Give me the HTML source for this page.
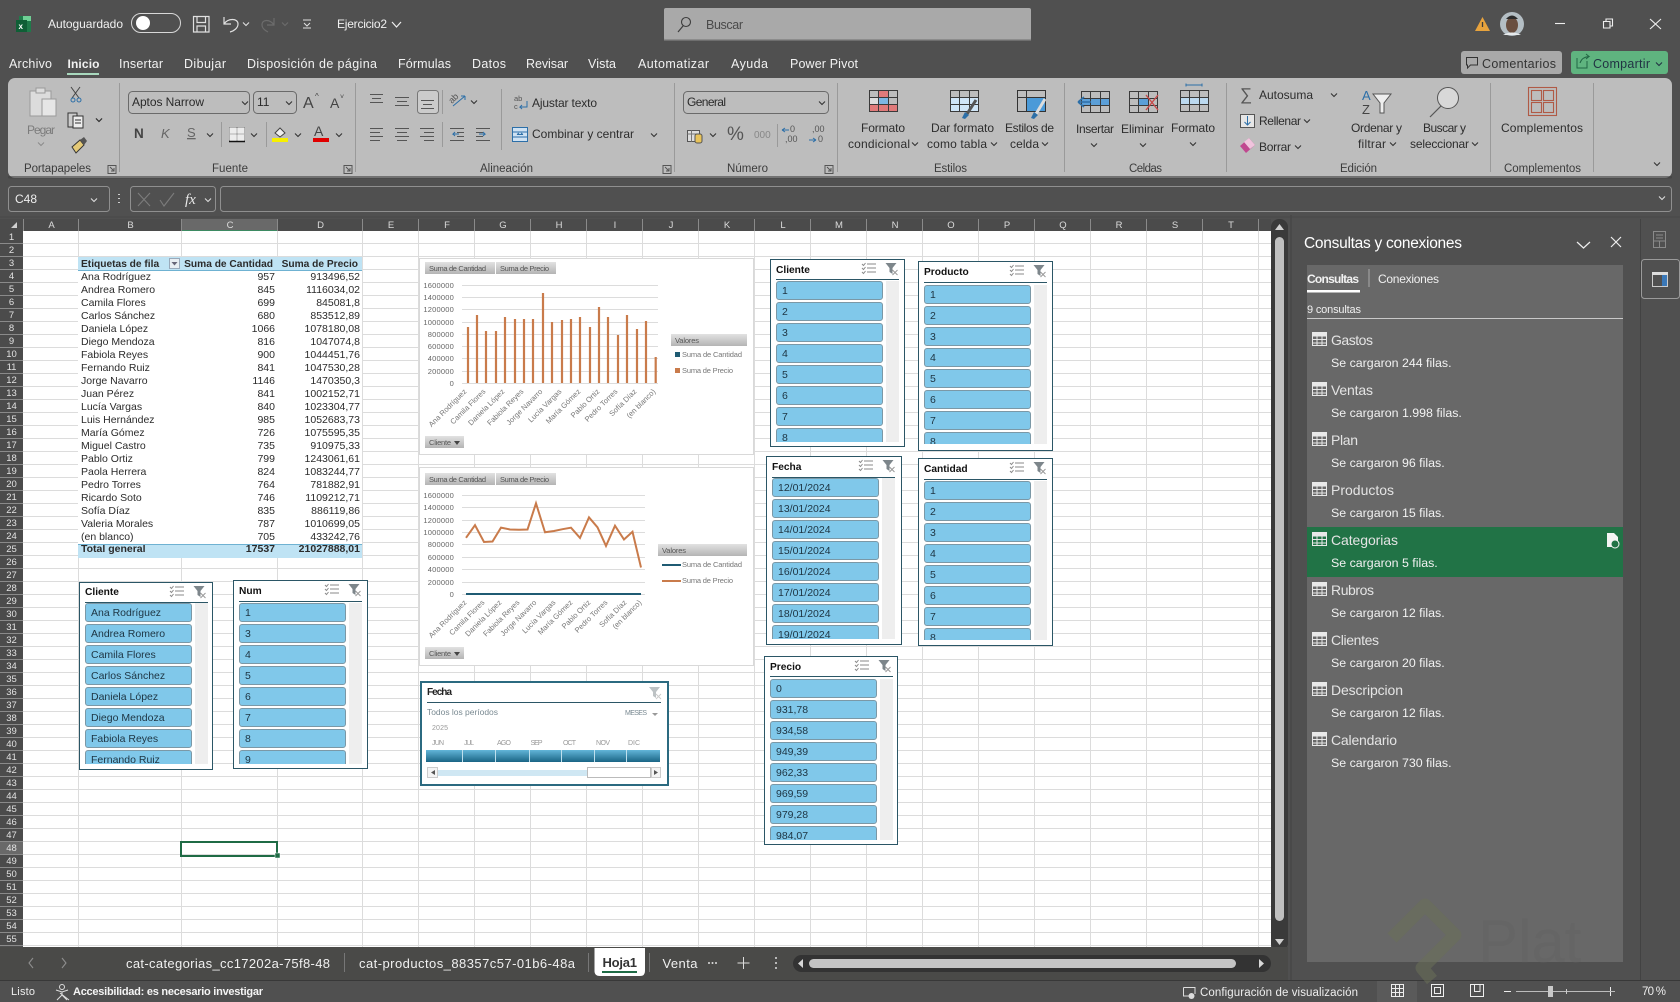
<!DOCTYPE html>
<html lang="es"><head><meta charset="utf-8"><title>Ejercicio2 - Excel</title>
<style>
html,body{margin:0;padding:0;width:1680px;height:1002px;overflow:hidden;background:#505050;font-family:"Liberation Sans",sans-serif}
#main{position:absolute;left:0;top:0}
svg text{font-family:"Liberation Sans",sans-serif}
#rh{position:absolute;left:0;top:231px;width:23px;background:#4b4b4b;color:#e2e2e2;font-size:9.5px;text-align:center}
#rh i{display:block;height:13px;line-height:14px;font-style:normal;border-bottom:1px solid #8a8a8a;box-sizing:border-box}
#pv{position:absolute;left:78px;top:257px;width:284px;border-collapse:collapse;table-layout:fixed;font-size:10.5px;color:#2b2b2b;background:#fff}
#pv td{padding:0 2px 0 3px;height:13px;line-height:13px;text-align:right;white-space:nowrap;overflow:hidden}
#pv td:first-child{text-align:left}
#pv .h td{background:#bfe3f4;font-weight:bold;font-size:10.2px;border-bottom:1px solid #6fb2d2;padding-right:4px;padding-top:3px;height:10px;line-height:10px;vertical-align:top}
#pv .f td{background:#bfe3f4;font-weight:bold;border-top:1px solid #6fb2d2;height:10px;line-height:9px;padding-bottom:3px;vertical-align:top}
.s{position:absolute;background:#fff;border:1px solid #2b5666;box-sizing:border-box}
.s b{position:absolute;left:5px;top:4px;font-size:10.2px;line-height:13px;color:#111}
.s hr{position:absolute;left:5px;width:123px;margin:0;border:0;height:1px;background:#2b5666}
.s svg{position:absolute;top:2px;width:38px;height:14px;right:5px}
.l{position:absolute;left:5px;width:124px;overflow:hidden;background:linear-gradient(90deg,transparent 110px,#eee 110px,#eee 123px,transparent 123px)}
.l i{display:block;box-sizing:border-box;width:107px;height:19px;margin-bottom:2px;border:1px solid #7b98a6;border-radius:3px;background:#80c8ea;font:10.5px/19px "Liberation Sans",sans-serif;padding-left:5px;color:#1d3442;white-space:nowrap}
</style></head><body>
<svg id="main" width="1680" height="1002" viewBox="0 0 1680 1002" xmlns="http://www.w3.org/2000/svg">
<defs>
<path id="c" d="M-3 -1.5L0 1.5L3 -1.5" fill="none" stroke-width="1.1"/>
<pattern id="rows" x="0" y="231" width="10" height="13" patternUnits="userSpaceOnUse"><rect width="10" height="13" fill="#fff"/><rect y="12" width="10" height="1" fill="#dcdcdc"/></pattern>
<g id="tbl" fill="none" stroke="#e8e8e8" stroke-width="1"><rect x=".5" y=".5" width="14" height="13"/><path d="M.5 4H14.5M.5 7.5H14.5M.5 11H14.5M5 .5V13.5M10 .5V13.5"/><rect x="1" y="1" width="13" height="3" fill="#e8e8e8" stroke="none"/></g>
<g id="ms" fill="none" stroke="#8a8a8a" stroke-width="1"><path d="M6 2H15M6 6H15M6 10H15"/><path d="M1 2L2.5 3.5L4.5 1M1 6L2.5 7.5L4.5 5M1 10L2.5 11.5L4.5 9"/></g>
<g id="fc"><path d="M0 1H11L7 6V12L4 10V6Z" fill="#7d868b"/><path d="M7 8L12 13M12 8L7 13" stroke="#999" stroke-width="1"/></g>
<g id="gr" fill="none" stroke="#3a3a3a" stroke-width="1"><rect x=".5" y=".5" width="28" height="21"/><path d="M.5 7.5H28.5M.5 14.5H28.5M9.5 .5V21.5M19.5 .5V21.5"/></g>
</defs>

<!-- Title bar -->
<rect x="19" y="16" width="12" height="16" fill="#1f7a4a"/><rect x="23" y="16" width="8" height="5" fill="#6fd095"/><rect x="16" y="20" width="11" height="12" fill="#0f5f36"/>
<text x="18.5" y="29" font-size="8" font-weight="bold" fill="#fff">x</text>
<text x="48" y="28" font-size="12" fill="#f0f0f0" textLength="75">Autoguardado</text>
<rect x="131.500" y="13.500" width="49" height="19" rx="9.500" fill="none" stroke="#d8d8d8"/><circle cx="143" cy="23" r="7" fill="#fff"/>
<g fill="none" stroke="#e0e0e0" stroke-width="1.200"><path d="M193.500 16.500H209V32H193.500ZM197 16.500V22.500H205.500V16.500M197 32V26H205.500V32"/><path d="M224 17V24H231M224 24C228 18 238 18 238 24C238 28 234 31 230 32"/></g>
<g stroke="#e0e0e0" fill="none"><use href="#c" x="246" y="24"/></g>
<g fill="none" stroke="#6c6c6c" stroke-width="1.200"><path d="M274 18V25H267M274 25C270 19 262 19 262 25C262 29 266 31 268 32"/><use href="#c" x="285" y="24"/></g>
<g fill="none" stroke="#e0e0e0"><path d="M303 20H311"/><path d="M304 23L307 26L310 23M303 28H311"/></g>
<text x="337" y="28" font-size="12" fill="#f0f0f0" textLength="50">Ejercicio2</text>
<path d="M392 22L396.500 27L401 22" fill="none" stroke="#eee" stroke-width="1.200"/>
<rect x="664" y="8" width="367" height="32" rx="2" fill="#a9a9a9"/><rect x="664" y="39" width="367" height="1.500" fill="#8c8c8c"/>
<circle cx="686" cy="22" r="4.500" fill="none" stroke="#3d3d3d" stroke-width="1.100"/><path d="M683 26L678 32" stroke="#3d3d3d" stroke-width="1.200"/>
<text x="706" y="29" font-size="12.500" fill="#4a4a4a" textLength="37">Buscar</text>
<path d="M1482.500 17L1490 31H1475Z" fill="#e8a33d"/><path d="M1482.500 22V27" stroke="#3a3a3a" stroke-width="1.300"/>
<circle cx="1512" cy="24" r="12" fill="#b4bec4"/><ellipse cx="1512" cy="25" rx="6" ry="8" fill="#6a4f40"/><path d="M1506 19Q1512 12 1518 19Z" fill="#2b2b2b"/><path d="M1503 35Q1512 30 1521 35Z" fill="#e6eaec"/>
<g fill="none" stroke="#eee" stroke-width="1.100"><path d="M1555 23.500H1565"/><path d="M1603.500 21.500H1610V28H1603.500ZM1606 21V19H1612.500V26H1610"/><path d="M1650 19L1661 29M1661 19L1650 29"/></g>

<!-- Menu -->
<g font-size="12.500" fill="#f2f2f2">
<text x="9" y="68" textLength="43">Archivo</text><text x="67.500" y="68" font-weight="bold" font-size="12" textLength="32">Inicio</text><text x="119" y="68" textLength="44">Insertar</text><text x="184" y="68" textLength="42">Dibujar</text><text x="247" y="68" textLength="130">Disposición de página</text><text x="398" y="68" textLength="53">Fórmulas</text><text x="472" y="68" textLength="34">Datos</text><text x="526" y="68" textLength="42">Revisar</text><text x="588" y="68" textLength="28">Vista</text><text x="638" y="68" textLength="71">Automatizar</text><text x="731" y="68" textLength="37">Ayuda</text><text x="790" y="68" textLength="68">Power Pivot</text>
</g>
<rect x="67" y="73" width="32" height="2" fill="#a8d8bd"/>
<rect x="1461" y="51" width="101" height="23" rx="3" fill="#a9a9a9"/>
<path d="M1466.500 57.500H1477.500V65H1470.500L1467.500 68V65H1466.500Z" fill="none" stroke="#333"/>
<text x="1482" y="68" font-size="12.500" fill="#333" textLength="74">Comentarios</text>
<rect x="1571" y="51" width="97" height="23" rx="3" fill="#5fb47f"/>
<path d="M1577 58V68H1587V61M1580 63Q1582 57 1589 56.500L1586 54M1589 56.500L1586 59" fill="none" stroke="#264" stroke-width="1"/>
<text x="1593" y="68" font-size="12.500" fill="#234" textLength="57">Compartir</text>
<g stroke="#234"><use href="#c" x="1659" y="64"/></g>

<!-- Ribbon -->
<rect x="8" y="78" width="1664" height="100" rx="7" fill="#bdbdbd"/>
<rect x="8" y="176" width="1664" height="2.500" rx="1" fill="#3f3f3f" opacity=".6"/>
<!-- separators -->
<g stroke="#9a9a9a"><path d="M119.500 83V172M355.500 83V172M674.500 83V172M837.500 83V172M1064.500 83V172M1226.500 83V172M1490.500 83V172M1593.500 83V172M501.500 89V150M221.500 122V147M266.500 122V147M442.500 90V114M442.500 122V147M777.500 124V147"/></g>
<!-- labels -->
<g font-size="11.500" fill="#3c3c3c">
<text x="24" y="172" textLength="67">Portapapeles</text><text x="212" y="172" textLength="36">Fuente</text><text x="480" y="172" textLength="53">Alineación</text><text x="727" y="172" textLength="41">Número</text><text x="934" y="172" textLength="33">Estilos</text><text x="1129" y="172" textLength="33">Celdas</text><text x="1340" y="172" textLength="37">Edición</text><text x="1504" y="172" textLength="77">Complementos</text>
</g>
<g fill="none" stroke="#555"><path d="M108 165.500H116V173.500H108ZM110 167L114 171M114 168V171H111M344 165.500H352V173.500H344ZM346 167L350 171M350 168V171H347M663 165.500H671V173.500H663ZM665 167L669 171M669 168V171H666M825 165.500H833V173.500H825ZM827 167L831 171M831 168V171H828"/></g>
<!-- clipboard -->
<g fill="#dcdcdc" stroke="#9a9a9a"><rect x="30" y="91" width="21" height="25"/><rect x="36" y="88" width="9" height="5"/><rect x="42" y="99" width="14" height="17" fill="#e6e6e6"/></g>
<text x="27" y="134" font-size="12" fill="#7c7c7c" textLength="28">Pegar</text>
<g stroke="#8c8c8c"><use href="#c" x="41" y="144"/></g>
<g fill="none" stroke="#333"><path d="M71 87L79 98M80 87L72 98" stroke="#444"/><circle cx="73" cy="100" r="2" stroke="#2c6fa8"/><circle cx="79" cy="100" r="2" stroke="#2c6fa8"/></g>
<g fill="#ccc" stroke="#333"><rect x="68" y="113" width="9" height="14"/><path d="M73 116H83V128H73Z" fill="#eee"/><path d="M75 120H81M75 123H81"/></g>
<g stroke="#333"><use href="#c" x="99" y="120"/></g>
<path d="M72 147L80 140L84 145L76 153Z" fill="#e4c977" stroke="#333"/><path d="M80 140L84 137L87 141L84 145" fill="#555"/>
<!-- font -->
<g fill="none" stroke="#6a6a6a"><rect x="128.500" y="91.500" width="121" height="22" rx="4"/><rect x="253.500" y="91.500" width="43" height="22" rx="4"/><rect x="683.500" y="91.500" width="145" height="22" rx="4"/></g>
<g font-size="12" fill="#2a2a2a"><text x="132" y="106" textLength="72">Aptos Narrow</text><text x="257" y="106">11</text><text x="687" y="106" textLength="39">General</text></g>
<g stroke="#333"><use href="#c" x="245" y="103"/><use href="#c" x="289" y="103"/><use href="#c" x="822" y="103"/><use href="#c" x="99" y="120"/><use href="#c" x="210" y="135"/><use href="#c" x="254" y="135"/><use href="#c" x="298" y="135"/><use href="#c" x="339" y="135"/><use href="#c" x="474" y="102"/><use href="#c" x="654" y="135"/><use href="#c" x="713" y="135"/></g>
<text x="303" y="108" font-size="16" fill="#444">A</text><text x="315" y="99" font-size="8" fill="#444">^</text><text x="330" y="108" font-size="14" fill="#444">A</text><text x="340" y="99" font-size="7" fill="#444">˅</text>
<text x="134" y="138" font-size="13.500" font-weight="bold" fill="#444">N</text><text x="161" y="138" font-size="13" font-style="italic" fill="#666">K</text><text x="187" y="137" font-size="13" fill="#666" text-decoration="underline">S</text>
<rect x="229" y="127" width="16" height="14" fill="#ececec"/><path d="M229.500 127.500H244.500M229.500 134H244.500M229.500 127.500V141M244.500 127.500V141M237 127.500V141" fill="none" stroke="#777" stroke-dasharray="1 1"/><path d="M229 141.500H245" stroke="#111" stroke-width="1.500"/>
<path d="M275 133L280 128L285 133L280 137Z" fill="#eee" stroke="#444"/><rect x="272" y="138" width="16" height="4" fill="#f7f000"/>
<text x="314" y="136" font-size="14" fill="#444">A</text><rect x="313" y="138" width="16" height="4" fill="#e00000"/>
<!-- alignment -->
<g stroke="#555" fill="none"><path d="M370 94.500H383M372 98.500H381M370 102.500H383M395 97.500H409M397 101.500H407M395 105.500H409M370 128.500H383M370 132.500H380M370 136.500H383M370 140.500H380M395 128.500H409M397 132.500H407M395 136.500H409M397 140.500H407M420 128.500H434M424 132.500H434M420 136.500H434M424 140.500H434M450 128.500H464M450 140.500H464M457 132.500H464M457 136.500H464M476 128.500H490M476 140.500H490M476 132.500H483M476 136.500H483"/></g>
<rect x="417.500" y="90.500" width="21" height="23" rx="3" fill="#cbcbcb" stroke="#777"/><path d="M421 100.500H434M423 104.500H432M421 108.500H434" stroke="#555"/>
<text transform="translate(452,104) rotate(-45)" font-size="9" fill="#555">ab</text><path d="M453 106L465 96M465 96H461M465 96V100" fill="none" stroke="#2c6fa8"/>
<path d="M456 134H453M459 134L453 134L455 132M453 134L455 136M479 134H485L483 132M485 134L483 136" fill="none" stroke="#2c6fa8"/>
<text x="514" y="101" font-size="7.500" fill="#555">ab</text><text x="514" y="109" font-size="7.500" fill="#555">c</text><path d="M527 101V107H520L522 105M520 107L522 109" fill="none" stroke="#2c6fa8"/>
<text x="532" y="107" font-size="12" fill="#2d2d2d" textLength="65">Ajustar texto</text>
<rect x="512.500" y="127.500" width="15" height="14" fill="#cfe2f3" stroke="#2c6fa8"/><path d="M512 132H528M512 137H528M517 134.500H523M517 134.500L519 133M523 134.500L521 133" stroke="#2c6fa8"/>
<text x="532" y="138" font-size="12" fill="#2d2d2d" textLength="102">Combinar y centrar</text>
<!-- number -->
<rect x="687.500" y="130.500" width="12" height="11" fill="#ddd" stroke="#555"/><path d="M687.500 134H699.500M691.500 130.500V141.500" stroke="#777"/><rect x="695" y="134" width="7" height="9" rx="2" fill="#e8c35a" stroke="#555"/>
<text x="727" y="140" font-size="19" fill="#555">%</text><text x="754" y="138" font-size="10" fill="#888">000</text>
<g font-size="9" fill="#555"><text x="790" y="132">0</text><text x="785" y="142">,00</text><text x="812" y="132">,00</text><text x="818" y="142">0</text></g>
<path d="M782 130H789M782 130L785 128M782 130L785 132M809 140H816M816 140L813 138M816 140L813 142" fill="none" stroke="#2c6fa8"/>
<!-- styles icons -->
<g transform="translate(869,90)"><rect x="10" y="0" width="10" height="7" fill="#e07a7a"/><rect x="0" y="7" width="10" height="7" fill="#dddddd"/><rect x="10" y="7" width="10" height="7" fill="#7db7e4"/><rect x="0" y="14" width="29" height="8" fill="#e07a7a"/><use href="#gr"/></g>
<g transform="translate(950,90)"><rect y="7" width="29" height="15" fill="#cfe5f7"/><use href="#gr"/><path d="M26 10L17 24" stroke="#555" stroke-width="3"/><path d="M15 22L19 25L15 29L12 28Z" fill="#2c6fa8"/></g>
<g transform="translate(1017,90)"><rect x="9" y="7" width="20" height="15" fill="#4b9ad8"/><rect x=".5" y=".5" width="28" height="21" fill="none" stroke="#333"/><path d="M.5 7.500H28.500M9.500 .5V21.500" stroke="#333"/><path d="M28 9L19 24" stroke="#ddd" stroke-width="3"/><path d="M17 22L21 25L17 29L14 28Z" fill="#2c6fa8"/></g>
<g font-size="12" fill="#2d2d2d"><text x="861" y="132" textLength="44">Formato</text><text x="848" y="148" textLength="62">condicional</text><text x="931" y="132" textLength="63">Dar formato</text><text x="927" y="148" textLength="60">como tabla</text><text x="1005" y="132" textLength="49">Estilos de</text><text x="1010" y="148" textLength="29">celda</text>
<text x="1076" y="133" textLength="38">Insertar</text><text x="1121" y="133" textLength="43">Eliminar</text><text x="1171" y="132" textLength="44">Formato</text>
<text x="1259" y="99" textLength="54">Autosuma</text><text x="1259" y="125" textLength="42">Rellenar</text><text x="1259" y="151" textLength="32">Borrar</text>
<text x="1351" y="132" textLength="51">Ordenar y</text><text x="1358" y="148" textLength="28">filtrar</text><text x="1423" y="132" textLength="43">Buscar y</text><text x="1410" y="148" textLength="59">seleccionar</text><text x="1501" y="132" textLength="82">Complementos</text></g>
<g stroke="#333"><use href="#c" x="915" y="144"/><use href="#c" x="994" y="144"/><use href="#c" x="1045" y="144"/><use href="#c" x="1094" y="145"/><use href="#c" x="1143" y="145"/><use href="#c" x="1193" y="144"/><use href="#c" x="1334" y="95"/><use href="#c" x="1307" y="121"/><use href="#c" x="1298" y="147"/><use href="#c" x="1393" y="144"/><use href="#c" x="1475" y="144"/><use href="#c" x="1657" y="164"/></g>
<!-- cells icons -->
<g transform="translate(1081,91)"><rect x="0" y="7" width="29" height="8" fill="#5b9fd8"/><use href="#gr"/><path d="M-3 11H10M-3 11L3 6M-3 11L3 16" fill="none" stroke="#2c6fa8" stroke-width="1.500"/></g>
<g transform="translate(1129,91)"><rect x="10" y="7" width="10" height="8" fill="#5b9fd8"/><use href="#gr"/><path d="M17 4L29 19M29 4L17 19" stroke="#c84a4a" stroke-width="1.400"/></g>
<g transform="translate(1180,90)"><rect y="7" width="29" height="8" fill="#bcd9ef"/><use href="#gr"/><path d="M6 -5H22M6 -6.500V-3.500M22 -6.500V-3.500" stroke="#2c6fa8"/></g>
<!-- editing icons -->
<text x="1240" y="100" font-size="17" fill="#555">∑</text>
<rect x="1240.500" y="114.500" width="14" height="13" fill="#e6e6e6" stroke="#555"/><path d="M1247.500 116V125M1244.500 122L1247.500 125L1250.500 122" fill="none" stroke="#2c6fa8"/>
<path d="M1240 146L1249 138L1255 145L1246 153Z" fill="#c0478f"/><path d="M1244 142L1249 138L1255 145L1250 149Z" fill="#f0c4dd"/>
<text x="1362" y="100" font-size="13" fill="#2c6fa8">A</text><text x="1362" y="114" font-size="13" fill="#444">Z</text><path d="M1373 94H1391L1384 103V113H1380V103Z" fill="#eee" stroke="#555"/>
<circle cx="1448" cy="98" r="10.500" fill="#d8d8d8" stroke="#555"/><path d="M1441 106L1430 117" stroke="#555" stroke-width="1.200"/>
<g fill="none" stroke="#b05a46" stroke-width="1.100"><rect x="1528.500" y="87.500" width="28" height="28"/><rect x="1531.500" y="90.500" width="10" height="10"/><rect x="1543.500" y="90.500" width="10" height="10"/><rect x="1531.500" y="102.500" width="10" height="10"/><rect x="1543.500" y="102.500" width="10" height="10"/></g>

<!-- Formula bar -->
<g fill="none" stroke="#8f8f8f"><rect x="8.500" y="186.500" width="101" height="25" rx="3"/><rect x="130.500" y="186.500" width="85" height="25" rx="3"/><rect x="220.500" y="186.500" width="1451" height="25" rx="3"/></g>
<text x="15" y="203" font-size="12" fill="#eee">C48</text>
<g stroke="#ddd"><use href="#c" x="94" y="200"/><use href="#c" x="208" y="200"/><use href="#c" x="1662" y="198"/></g>
<path d="M119 194V195M119 198V199M119 202V203" stroke="#ccc" stroke-width="2"/>
<path d="M138 193L150 206M150 193L138 206M160 200L164 206L174 193" fill="none" stroke="#7c7c7c" stroke-width="1.100"/>
<text x="185" y="204" font-size="15" font-style="italic" fill="#e8e8e8" style="font-family:'Liberation Serif',serif">fx</text>

<!-- Column headers -->
<rect x="0" y="219" width="1271" height="12" fill="#4b4b4b"/>
<rect x="181" y="219" width="96" height="12" fill="#696969"/><rect x="181" y="230" width="96" height="1.500" fill="#3d8a62"/>
<path d="M11 228L17 222V228Z" fill="#d0d0d0"/>
<g stroke="#8a8a8a"><path d="M23.500 219V231M78.500 219V231M181.500 219V231M277.500 219V231M362.500 219V231M418.500 219V231M474.500 219V231M530.500 219V231M586.500 219V231M642.500 219V231M698.500 219V231M754.500 219V231M810.500 219V231M866.500 219V231M922.500 219V231M978.500 219V231M1034.500 219V231M1090.500 219V231M1146.500 219V231M1202.500 219V231M1258.500 219V231"/></g>
<g font-size="9.500" fill="#dcdcdc" text-anchor="middle"><text x="51.500" y="228">A</text><text x="130.500" y="228">B</text><text x="230" y="228">C</text><text x="320.500" y="228">D</text><text x="391" y="228">E</text><text x="447" y="228">F</text><text x="503" y="228">G</text><text x="559" y="228">H</text><text x="615" y="228">I</text><text x="671" y="228">J</text><text x="727" y="228">K</text><text x="783" y="228">L</text><text x="839" y="228">M</text><text x="895" y="228">N</text><text x="951" y="228">O</text><text x="1007" y="228">P</text><text x="1063" y="228">Q</text><text x="1119" y="228">R</text><text x="1175" y="228">S</text><text x="1231" y="228">T</text></g>

<!-- Grid -->
<rect x="23" y="231" width="1248" height="716" fill="url(#rows)"/>
<path d="M78.500 231V947M181.500 231V947M277.500 231V947M362.500 231V947M418.500 231V947M474.500 231V947M530.500 231V947M586.500 231V947M642.500 231V947M698.500 231V947M754.500 231V947M810.500 231V947M866.500 231V947M922.500 231V947M978.500 231V947M1034.500 231V947M1090.500 231V947M1146.500 231V947M1202.500 231V947M1258.500 231V947" stroke="#dcdcdc"/>

<!-- Selected cell -->
<rect x="181" y="842" width="96" height="14" fill="none" stroke="#1f6b45" stroke-width="2"/><rect x="275" y="853" width="5" height="5" fill="#1f6b45" stroke="#fff" stroke-width=".5"/>

<!-- Chart 1 -->
<rect x="419.500" y="258.500" width="334" height="196" fill="#fff" stroke="#d9d9d9"/>
<defs><linearGradient id="bt" x1="0" y1="0" x2="0" y2="1"><stop offset="0" stop-color="#e2e2e2"/><stop offset="1" stop-color="#b4b4b4"/></linearGradient></defs>
<g fill="url(#bt)"><rect x="425" y="262" width="70" height="12"/><rect x="496" y="262" width="60" height="12"/><rect x="671" y="334" width="76" height="12"/><rect x="425" y="436" width="39" height="12"/></g>
<g font-size="7.500" fill="#555"><text x="429" y="271" textLength="57">Suma de Cantidad</text><text x="500" y="271" textLength="49">Suma de Precio</text><text x="675" y="343" textLength="24">Valores</text><text x="429" y="445" textLength="22">Cliente</text></g>
<path d="M454 441H460L457 445Z" fill="#444"/>
<path d="M462 285.500H658M462 297.500H658M462 309.500H658M462 322.500H658M462 334.500H658M462 346.500H658M462 358.500H658M462 371.500H658M462 383.500H658" stroke="#dcdcdc"/>
<g font-size="7.500" fill="#666" text-anchor="end" letter-spacing=".2"><text x="454" y="288">1600000</text><text x="454" y="300">1400000</text><text x="454" y="312">1200000</text><text x="454" y="325">1000000</text><text x="454" y="337">800000</text><text x="454" y="349">600000</text><text x="454" y="361">400000</text><text x="454" y="374">200000</text><text x="454" y="386">0</text></g>
<path d="M468 383V327M477 383V315M486 383V331M496 383V331M505 383V317M515 383V319M524 383V319M533 383V319M543 383V293M552 383V322M562 383V320M571 383V319M580 383V317M590 383V327M599 383V307M608 383V317M618 383V335M627 383V315M637 383V329M646 383V321M655.700 383V357" stroke="#c97b4b" stroke-width="2.200"/>
<g font-size="7.500" fill="#777" text-anchor="end"><text transform="translate(467,392) rotate(-45)">Ana Rodríguez</text><text transform="translate(486,392) rotate(-45)">Camila Flores</text><text transform="translate(505,392) rotate(-45)">Daniela López</text><text transform="translate(524,392) rotate(-45)">Fabiola Reyes</text><text transform="translate(543,392) rotate(-45)">Jorge Navarro</text><text transform="translate(562,392) rotate(-45)">Lucía Vargas</text><text transform="translate(581,392) rotate(-45)">María Gómez</text><text transform="translate(600,392) rotate(-45)">Pablo Ortiz</text><text transform="translate(618,392) rotate(-45)">Pedro Torres</text><text transform="translate(637,392) rotate(-45)">Sofía Díaz</text><text transform="translate(656,392) rotate(-45)">(en blanco)</text></g>
<rect x="675" y="352" width="5" height="5" fill="#1f5b73"/><rect x="675" y="368" width="5" height="5" fill="#c97b4b"/>
<g font-size="7.500" fill="#777"><text x="682" y="357" textLength="60">Suma de Cantidad</text><text x="682" y="373" textLength="51">Suma de Precio</text></g>

<!-- Chart 2 -->
<rect x="419.500" y="467.500" width="334" height="198" fill="#fff" stroke="#d9d9d9"/>
<g fill="url(#bt)"><rect x="425" y="473" width="70" height="12"/><rect x="496" y="473" width="60" height="12"/><rect x="658" y="544" width="89" height="12"/><rect x="425" y="647" width="39" height="12"/></g>
<g font-size="7.500" fill="#555"><text x="429" y="482" textLength="57">Suma de Cantidad</text><text x="500" y="482" textLength="49">Suma de Precio</text><text x="662" y="553" textLength="24">Valores</text><text x="429" y="656" textLength="22">Cliente</text></g>
<path d="M454 652H460L457 656Z" fill="#444"/>
<path d="M462 495.500H645M462 507.500H645M462 520.500H645M462 532.500H645M462 544.500H645M462 557.500H645M462 569.500H645M462 582.500H645M462 594.500H645" stroke="#dcdcdc"/>
<g font-size="7.500" fill="#666" text-anchor="end" letter-spacing=".2"><text x="454" y="498">1600000</text><text x="454" y="510">1400000</text><text x="454" y="523">1200000</text><text x="454" y="535">1000000</text><text x="454" y="547">800000</text><text x="454" y="560">600000</text><text x="454" y="572">400000</text><text x="454" y="585">200000</text><text x="454" y="597">0</text></g>
<path d="M466 594H641" stroke="#1f5b73" stroke-width="2"/>
<path d="M466 537.800L475 525.200L484 542L492.500 541.500L501 527.600L510 529.500L519 529.700L527.500 529.500L536 503.300L545 532.300L554 531L562.500 529.200L571 527.700L580 537.900L589 517.400L597.500 527.300L606 545.900L615 525.700L624 539.500L632.500 531.800L641 567.500" fill="none" stroke="#c97b4b" stroke-width="2"/>
<g font-size="7.500" fill="#777" text-anchor="end"><text transform="translate(467,603) rotate(-45)">Ana Rodríguez</text><text transform="translate(485,603) rotate(-45)">Camila Flores</text><text transform="translate(502,603) rotate(-45)">Daniela López</text><text transform="translate(520,603) rotate(-45)">Fabiola Reyes</text><text transform="translate(537,603) rotate(-45)">Jorge Navarro</text><text transform="translate(556,603) rotate(-45)">Lucía Vargas</text><text transform="translate(573,603) rotate(-45)">María Gómez</text><text transform="translate(591,603) rotate(-45)">Pablo Ortiz</text><text transform="translate(608,603) rotate(-45)">Pedro Torres</text><text transform="translate(627,603) rotate(-45)">Sofía Díaz</text><text transform="translate(642,603) rotate(-45)">(en blanco)</text></g>
<path d="M662 565H681" stroke="#1f5b73" stroke-width="2"/><path d="M662 581H681" stroke="#c97b4b" stroke-width="2"/>
<g font-size="7.500" fill="#777"><text x="682" y="567" textLength="60">Suma de Cantidad</text><text x="682" y="583" textLength="51">Suma de Precio</text></g>

<!-- Timeline -->
<rect x="421" y="682" width="247" height="103" fill="#fff" stroke="#2b6a80" stroke-width="2"/>
<text x="427" y="695" font-size="10" font-weight="bold" fill="#222" textLength="25">Fecha</text>
<path d="M427 702.500H661" stroke="#2b5666"/>
<use href="#fc" x="649" y="686" opacity=".5"/>
<g font-size="8.500" fill="#7a8a92"><text x="427" y="715" textLength="71">Todos los períodos</text><text x="625" y="715" font-size="7" textLength="22">MESES</text><text x="432" y="730" font-size="7" fill="#999" textLength="16">2025</text></g>
<path d="M652 713H658L655 716Z" fill="#999"/>
<g font-size="7" fill="#999"><text x="432" y="745" textLength="12">JUN</text><text x="464" y="745" textLength="10">JUL</text><text x="497" y="745" textLength="14">AGO</text><text x="530.500" y="745" textLength="12">SEP</text><text x="563" y="745" textLength="13">OCT</text><text x="596" y="745" textLength="14">NOV</text><text x="628" y="745" textLength="12">DIC</text></g>
<defs><linearGradient id="tb" x1="0" y1="0" x2="0" y2="1"><stop offset="0" stop-color="#62b5d8"/><stop offset="1" stop-color="#1a6585"/></linearGradient></defs>
<rect x="426" y="750" width="234" height="12" fill="url(#tb)"/><path d="M462.500 750V762M495.500 750V762M529.500 750V762M561.500 750V762M594.500 750V762M626.500 750V762" stroke="#bfe0ee"/>
<rect x="427.500" y="767.500" width="10" height="10" fill="#f4f4f4" stroke="#ccc"/><path d="M435 770V775L431 772.500Z" fill="#555"/>
<rect x="438" y="770" width="149" height="6" fill="#cfe7f3"/>
<rect x="587.500" y="767.500" width="63" height="10" fill="#fff" stroke="#bbb"/>
<rect x="651.500" y="767.500" width="9" height="10" fill="#f4f4f4" stroke="#ccc"/><path d="M654 770V775L658 772.500Z" fill="#555"/>

<!-- Vertical scroll -->
<rect x="1271" y="219" width="17" height="732" rx="8" fill="#3a3a3a"/>
<rect x="1275" y="237" width="9" height="684" rx="4.500" fill="#c0c0c0"/>
<path d="M1279.500 224L1284 230H1275Z" fill="#d0d0d0"/><path d="M1275 939H1284L1279.500 945Z" fill="#d0d0d0"/>

<!-- Tab bar -->
<rect x="0" y="947" width="1291" height="33" fill="#4a4a48"/><rect x="0" y="980" width="1680" height="1" fill="#383838"/>
<path d="M33 958L29 963L33 968M62 958L66 963L62 968" fill="none" stroke="#8e8e8e" stroke-width="1.100"/>
<g font-size="13" fill="#f0f0f0"><text x="126" y="968" textLength="204">cat-categorias_cc17202a-75f8-48</text><text x="359" y="968" textLength="216">cat-productos_88357c57-01b6-48a</text><text x="662.500" y="968" textLength="35">Venta</text></g>
<path d="M344.500 953V972M649.500 953V972M588.500 953V972" stroke="#777"/>
<path d="M594.500 948H645V971Q645 976 640 976H600Q594.500 976 594.500 971Z" fill="#fff"/>
<text x="602.500" y="967" font-size="13" font-weight="bold" fill="#333" textLength="34.500">Hoja1</text><rect x="602" y="971" width="35" height="2" fill="#1f6b45"/>
<circle cx="709" cy="963" r="1" fill="#ddd"/><circle cx="712.500" cy="963" r="1" fill="#ddd"/><circle cx="716" cy="963" r="1" fill="#ddd"/>
<path d="M743.500 957V969M737.500 963H749.500" stroke="#ddd"/><path d="M776 957V959M776 962V964M776 967V969" stroke="#ddd" stroke-width="1.500"/>
<rect x="793" y="955" width="478" height="17" rx="8.500" fill="#333"/><rect x="809" y="959" width="427" height="9" rx="4.500" fill="#c4c4c4"/>
<path d="M803 959V968L798 963.500ZM1259 959V968L1264 963.500Z" fill="#d8d8d8"/>

<!-- Panel -->
<rect x="1288" y="215" width="352" height="765" fill="#505050"/>
<path d="M1291 215V980M1640.500 219V980" stroke="#424242"/>
<rect x="0" y="216" width="1680" height="2" fill="#474747" opacity=".4"/>
<text x="1304" y="248" font-size="15.500" fill="#fff" textLength="158">Consultas y conexiones</text>
<path d="M1577 242L1583.500 248L1590 242M1611 237L1621 247M1621 237L1611 247" fill="none" stroke="#eee" stroke-width="1.200"/>
<rect x="1307" y="265" width="316" height="697" fill="#686868"/>
<text x="1307" y="283" font-size="12" font-weight="bold" fill="#f2f2f2" textLength="52">Consultas</text><rect x="1307" y="290" width="53" height="2.500" fill="#fff"/>
<path d="M1369 269V287" stroke="#aaa"/>
<text x="1378" y="283" font-size="12" fill="#f0f0f0" textLength="61">Conexiones</text>
<text x="1307" y="313" font-size="11" fill="#f0f0f0" textLength="54">9 consultas</text>
<path d="M1307 318.500H1623" stroke="#c9c9c9"/>
<rect x="1307" y="527" width="316" height="50" fill="#217346"/>
<use href="#tbl" x="1312" y="332"/><use href="#tbl" x="1312" y="382"/><use href="#tbl" x="1312" y="432"/><use href="#tbl" x="1312" y="482"/><use href="#tbl" x="1312" y="532"/><use href="#tbl" x="1312" y="582"/><use href="#tbl" x="1312" y="632"/><use href="#tbl" x="1312" y="682"/><use href="#tbl" x="1312" y="732"/>
<g font-size="14" fill="#e4e4e4"><text x="1331" y="345" textLength="42">Gastos</text><text x="1331" y="395" textLength="42">Ventas</text><text x="1331" y="445" textLength="27">Plan</text><text x="1331" y="495" textLength="63">Productos</text><text x="1331" y="545" textLength="67">Categorias</text><text x="1331" y="595" textLength="43">Rubros</text><text x="1331" y="645" textLength="48">Clientes</text><text x="1331" y="695" textLength="72">Descripcion</text><text x="1331" y="745" textLength="66">Calendario</text></g>
<g font-size="12.400" fill="#f2f2f2"><text x="1331" y="367">Se cargaron 244 filas.</text><text x="1331" y="417">Se cargaron 1.998 filas.</text><text x="1331" y="467">Se cargaron 96 filas.</text><text x="1331" y="517">Se cargaron 15 filas.</text><text x="1331" y="567">Se cargaron 5 filas.</text><text x="1331" y="617">Se cargaron 12 filas.</text><text x="1331" y="667">Se cargaron 20 filas.</text><text x="1331" y="717">Se cargaron 12 filas.</text><text x="1331" y="767">Se cargaron 730 filas.</text></g>
<path d="M1607 533H1614L1618 537V547H1607Z" fill="#f4f4f4"/><circle cx="1615" cy="544" r="4" fill="#217346" stroke="#f4f4f4"/>
<!-- watermark -->
<path d="M1392 938L1425 905L1455 935L1422 968L1432 980" fill="none" stroke="#6a6f58" stroke-width="13" stroke-linejoin="round" opacity=".55"/>
<text x="1478" y="962" font-size="60" fill="#636363" opacity=".55">Plat</text>
<!-- right strip -->
<g fill="none" stroke="#8a8a8a"><rect x="1653.500" y="231.500" width="12" height="16"/><path d="M1656 235H1663M1656 238H1663M1653.500 241H1665.500M1659.500 241V247.500"/></g>
<rect x="1641.500" y="259.500" width="38" height="39" rx="3" fill="none" stroke="#9a9a9a"/>
<rect x="1652.500" y="272.500" width="15" height="14" fill="none" stroke="#ccc"/><rect x="1652" y="272" width="16" height="3" fill="#ddd"/><rect x="1662" y="275" width="5" height="11" fill="#3a78b8"/>

<!-- Status -->
<rect x="1377" y="981" width="40" height="21" fill="#5a5a5a"/>
<text x="11" y="995" font-size="11" fill="#eee" textLength="24">Listo</text>
<circle cx="62" cy="987" r="2.500" fill="none" stroke="#ddd"/><path d="M56 990L62 992L68 990M62 992V995M57 1000L62 995L67 1000M60 993L69 1000" fill="none" stroke="#ddd"/>
<text x="73" y="995" font-size="11" font-weight="bold" fill="#f4f4f4" textLength="190">Accesibilidad: es necesario investigar</text>
<path d="M1183.500 987.500H1195V994M1183.500 987.500V996H1189" fill="none" stroke="#ddd"/><circle cx="1191.500" cy="996" r="3" fill="#ddd"/>
<text x="1200" y="996" font-size="11.500" fill="#eee" textLength="158">Configuración de visualización</text>
<g fill="none" stroke="#eee"><rect x="1391.500" y="984.500" width="12" height="12"/><path d="M1391.500 988.500H1403.500M1391.500 992.500H1403.500M1395.500 984.500V996.500M1399.500 984.500V996.500"/><rect x="1431.500" y="984.500" width="12" height="12"/><rect x="1434.500" y="987.500" width="6" height="6"/><rect x="1470.500" y="984.500" width="13" height="12"/><path d="M1474.500 984.500V991.500H1480V984.500"/></g>
<path d="M1504 991.500H1511M1606 991.500H1615M1610.500 987V996" stroke="#eee"/>
<path d="M1516 991.500H1615" stroke="#bcbcbc"/><rect x="1548" y="986" width="5" height="11" fill="#c9c9c9"/><path d="M1566.500 989V994" stroke="#ccc"/>
<text x="1642" y="995" font-size="11.500" fill="#eee" textLength="24">70 %</text>
</svg>

<div id="rh"><i>1</i><i>2</i><i>3</i><i>4</i><i>5</i><i>6</i><i>7</i><i>8</i><i>9</i><i>10</i><i>11</i><i>12</i><i>13</i><i>14</i><i>15</i><i>16</i><i>17</i><i>18</i><i>19</i><i>20</i><i>21</i><i>22</i><i>23</i><i>24</i><i>25</i><i>26</i><i>27</i><i>28</i><i>29</i><i>30</i><i>31</i><i>32</i><i>33</i><i>34</i><i>35</i><i>36</i><i>37</i><i>38</i><i>39</i><i>40</i><i>41</i><i>42</i><i>43</i><i>44</i><i>45</i><i>46</i><i>47</i><i style="background:#696969">48</i><i>49</i><i>50</i><i>51</i><i>52</i><i>53</i><i>54</i><i>55</i></div>

<table id="pv"><colgroup><col style="width:103px"><col style="width:96px"><col style="width:85px"></colgroup>
<tr class="h"><td>Etiquetas de fila<td>Suma de Cantidad<td>Suma de Precio</tr>
<tr><td>Ana Rodríguez<td>957<td>913496,52</tr>
<tr><td>Andrea Romero<td>845<td>1116034,02</tr>
<tr><td>Camila Flores<td>699<td>845081,8</tr>
<tr><td>Carlos Sánchez<td>680<td>853512,89</tr>
<tr><td>Daniela López<td>1066<td>1078180,08</tr>
<tr><td>Diego Mendoza<td>816<td>1047074,8</tr>
<tr><td>Fabiola Reyes<td>900<td>1044451,76</tr>
<tr><td>Fernando Ruiz<td>841<td>1047530,28</tr>
<tr><td>Jorge Navarro<td>1146<td>1470350,3</tr>
<tr><td>Juan Pérez<td>841<td>1002152,71</tr>
<tr><td>Lucía Vargas<td>840<td>1023304,77</tr>
<tr><td>Luis Hernández<td>985<td>1052683,73</tr>
<tr><td>María Gómez<td>726<td>1075595,35</tr>
<tr><td>Miguel Castro<td>735<td>910975,33</tr>
<tr><td>Pablo Ortiz<td>799<td>1243061,61</tr>
<tr><td>Paola Herrera<td>824<td>1083244,77</tr>
<tr><td>Pedro Torres<td>764<td>781882,91</tr>
<tr><td>Ricardo Soto<td>746<td>1109212,71</tr>
<tr><td>Sofía Díaz<td>835<td>886119,86</tr>
<tr><td>Valeria Morales<td>787<td>1010699,05</tr>
<tr><td>(en blanco)<td>705<td>433242,76</tr>
<tr class="f"><td>Total general<td>17537<td>21027888,01</tr>
</table>
<svg style="position:absolute;left:169px;top:258px" width="11" height="11"><rect x=".5" y=".5" width="10" height="10" fill="#e8eef2" stroke="#9ab"/><path d="M2.500 4H8.500L5.500 7.500Z" fill="#667"/></svg>

<div class="s" style="left:79px;top:582px;width:134px;height:188px"><b style="top:3px">Cliente</b><svg viewBox="0 0 38 14"><use href="#ms"/><use href="#fc" x="24.500"/></svg><hr style="top:19px"><div class="l" style="top:20px;height:161px"><i>Ana Rodríguez</i><i>Andrea Romero</i><i>Camila Flores</i><i>Carlos Sánchez</i><i>Daniela López</i><i>Diego Mendoza</i><i>Fabiola Reyes</i><i>Fernando Ruiz</i></div></div>
<div class="s" style="left:233px;top:580px;width:135px;height:189px"><b>Num</b><svg viewBox="0 0 38 14"><use href="#ms"/><use href="#fc" x="24.500"/></svg><hr style="top:20px"><div class="l" style="top:22px;height:161px"><i>1</i><i>3</i><i>4</i><i>5</i><i>6</i><i>7</i><i>8</i><i>9</i></div></div>
<div class="s" style="left:770px;top:259px;width:135px;height:188px"><b>Cliente</b><svg viewBox="0 0 38 14"><use href="#ms"/><use href="#fc" x="24.500"/></svg><hr style="top:19px"><div class="l" style="top:21px;height:161px"><i>1</i><i>2</i><i>3</i><i>4</i><i>5</i><i>6</i><i>7</i><i>8</i></div></div>
<div class="s" style="left:918px;top:261px;width:135px;height:190px"><b>Producto</b><svg viewBox="0 0 38 14"><use href="#ms"/><use href="#fc" x="24.500"/></svg><hr style="top:20px"><div class="l" style="top:23px;height:159px"><i>1</i><i>2</i><i>3</i><i>4</i><i>5</i><i>6</i><i>7</i><i>8</i></div></div>
<div class="s" style="left:766px;top:456px;width:136px;height:189px"><b>Fecha</b><svg viewBox="0 0 38 14"><use href="#ms"/><use href="#fc" x="24.500"/></svg><hr style="top:20px"><div class="l" style="top:21px;height:161px"><i>12/01/2024</i><i>13/01/2024</i><i>14/01/2024</i><i>15/01/2024</i><i>16/01/2024</i><i>17/01/2024</i><i>18/01/2024</i><i>19/01/2024</i></div></div>
<div class="s" style="left:918px;top:458px;width:135px;height:188px"><b>Cantidad</b><svg viewBox="0 0 38 14"><use href="#ms"/><use href="#fc" x="24.500"/></svg><hr style="top:20px"><div class="l" style="top:22px;height:159px"><i>1</i><i>2</i><i>3</i><i>4</i><i>5</i><i>6</i><i>7</i><i>8</i></div></div>
<div class="s" style="left:764px;top:656px;width:134px;height:189px"><b>Precio</b><svg viewBox="0 0 38 14"><use href="#ms"/><use href="#fc" x="24.500"/></svg><hr style="top:19px"><div class="l" style="top:22px;height:161px"><i>0</i><i>931,78</i><i>934,58</i><i>949,39</i><i>962,33</i><i>969,59</i><i>979,28</i><i>984,07</i></div></div>
</body></html>
